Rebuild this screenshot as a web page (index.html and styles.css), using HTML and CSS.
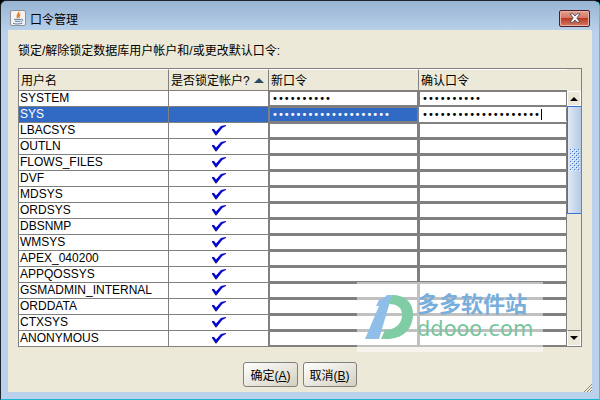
FILE: index.html
```
<!DOCTYPE html>
<html lang="zh-CN">
<head>
    <meta charset="utf-8">
    <title>口令管理</title>
    <link rel="stylesheet" href="styles.css">
</head>
<body>
    <div class="window">
        <header class="titlebar">
            <svg class="app-icon" viewBox="0 0 16 16">
                <rect x="0.5" y="0.5" width="15" height="15" rx="1.5" fill="#f4f3f1" stroke="#8d9299"/>
                <path d="M8.6 1.8C9.8 3.8 5.4 5 7.6 8.2M10.4 4.2C8.4 5.2 8.4 6 9.2 8" fill="none" stroke="#e5822b" stroke-width="1.5"/>
                <path d="M4 9.4h7M5 11.3h5.4M3 13.4c2.6.8 6.8.8 9.4-.3M11.2 9.3c2.4-.5 2 2-.4 2.2" fill="none" stroke="#557da3"/>
            </svg>
            <h1>口令管理</h1>
            <button class="close" type="button" aria-label="关闭">
                <svg viewBox="0 0 12 10">
                    <path d="M1 .8h3L6 3 8 .8h3L7.8 5 11 9.2H8L6 7 4 9.2H1L4.2 5z" fill="#fff" stroke="#4d5260" stroke-width=".9"/>
                </svg>
            </button>
        </header>
        <form class="content">
            <p class="hint">锁定/解除锁定数据库用户帐户和/或更改默认口令:</p>
            <div class="grid">
                <table id="accounts">
                    <colgroup>
                        <col class="col-user">
                        <col class="col-lock">
                        <col class="col-new">
                        <col>
                    </colgroup>
                    <thead>
                        <tr>
                            <th>用户名</th>
                            <th>是否锁定帐户? <svg class="sort" viewBox="0 0 10 5"><path d="M0 5 5 0l5 5z" fill="#2b4a63"/></svg></th>
                            <th>新口令</th>
                            <th>确认口令</th>
                        </tr>
                    </thead>
                    <tbody></tbody>
                </table>
                <div class="scrollbar">
                    <button class="arrow" type="button" aria-label="向上"><svg viewBox="0 0 8 4"><path d="M0 4 4 0l4 4z"/></svg></button>
                    <div class="track">
                        <div class="thumb">
                            <svg viewBox="0 0 10 22">
                                <defs>
                                    <pattern id="dots" width="4" height="4" patternUnits="userSpaceOnUse">
                                        <path d="M0 0h1v1H0zM2 2h1v1H2z" fill="#3a74d0"/>
                                        <path d="M1 1h1v1H1zM3 3h1v1H3z" fill="#fff"/>
                                    </pattern>
                                </defs>
                                <rect width="10" height="22" fill="url(#dots)"/>
                            </svg>
                        </div>
                    </div>
                    <button class="arrow down" type="button" aria-label="向下"><svg viewBox="0 0 8 4"><path d="M0 0h8L4 4z"/></svg></button>
                </div>
            </div>
            <div class="actions">
                <button type="button">确定(<u>A</u>)</button>
                <button type="button">取消(<u>B</u>)</button>
            </div>
        </form>
        <svg class="grip" viewBox="0 0 8 8"><path d="M0 8 8 0M3 8l5-5M6 8l2-2" stroke="#8c8a7e"/></svg>
        <div class="watermark">
            <svg viewBox="0 0 48 45">
                <path d="M14 5C18 4 20 2 22 0H27L14 44H0L14 11H11z" fill="#8fbfe8"/>
                <path d="M27 0C41 0 48 8 48 19 48 35 37 44 22 44H16L20 35C31 35 37 28 37 20 37 13 33 9 24 9z" fill="#7fcca5"/>
            </svg>
            <div class="brand">
                <strong>多多软件站</strong>
                <span>ddooo.com</span>
            </div>
        </div>
    </div>

    <script>
        const users = ["SYSTEM", "SYS", "LBACSYS", "OUTLN", "FLOWS_FILES", "DVF", "MDSYS", "ORDSYS",
            "DBSNMP", "WMSYS", "APEX_040200", "APPQOSSYS", "GSMADMIN_INTERNAL", "ORDDATA", "CTXSYS", "ANONYMOUS"];
        const lengths = { SYSTEM: 10, SYS: 20 };
        const check = '<svg class="check" viewBox="0 0 14 11"><path d="M0 4h2l2 2.5L9 1l5-1v1L10 3 4.5 10H3.5L0 5z" fill="#0000d8"/><path d="M1 6l3 4.5L10 3" fill="none" stroke="#222266" stroke-width=".6"/></svg>';
        const body = document.querySelector("#accounts tbody");

        users.forEach(function (user) {
            const value = "x".repeat(lengths[user] || 0);
            const row = document.createElement("tr");
            if (user == "SYS") {
                row.className = "selected";
            }
            row.innerHTML =
                "<td>" + user + "</td>" +
                '<td class="lock">' + (value ? "" : check) + "</td>" +
                '<td class="pw"><input type="password" aria-label="' + user + ' 新口令" value="' + value + '"></td>' +
                '<td class="pw"><input type="password" aria-label="' + user + ' 确认口令" value="' + value + '"></td>';
            body.appendChild(row);
        });

        // steady caret after the last character of the field being edited
        const caret = document.createElement("span");
        caret.className = "caret";
        document.querySelector(".selected td:last-child").appendChild(caret);
    </script>
</body>
</html>
```
FILE: styles.css
```
* {
    box-sizing: border-box;
}

body {
    margin: 0;
    background-color: #000000;
    font-family: "Liberation Sans", "Noto Sans CJK SC", sans-serif;
    font-size: 12px;
    color: #000000;
}

.window {
    position: relative;
    display: flex;
    flex-direction: column;
    min-height: 100vh;
    padding: 0 7px 7px;
    border: 1px solid #20242c;
    border-right-color: #22d3ee;
    border-bottom-color: #18b8d0;
    border-radius: 6px 6px 0 0;
    background: linear-gradient(#98b4d2, #b9d1ea 30px, #b9d1ea);
}

.titlebar {
    display: flex;
    align-items: center;
    height: 29px;
    padding: 5px 2px 0 2px;
}

.app-icon {
    width: 16px;
    height: 16px;
    margin-right: 4px;
}

h1 {
    flex: 1;
    margin: 0;
    font-size: 12px;
    font-weight: normal;
}

.close {
    display: flex;
    align-items: center;
    justify-content: center;
    width: 31px;
    height: 17px;
    padding: 0;
    border: 1px solid #4a1f28;
    border-radius: 2px;
    background: linear-gradient(#e3a08f, #d5735f 50%, #b93a24 50%, #d47b66);
    box-shadow: inset 0 0 0 1px #e9b0a3;
}

.close svg {
    width: 12px;
    height: 10px;
}

.content {
    flex: 1;
    display: flex;
    flex-direction: column;
    padding: 12px 10px 5px;
    background-color: #ece9d8;
}

.hint {
    margin: 0 0 8px;
    line-height: 18px;
}

.grid {
    flex: 1;
    display: flex;
    border: 1px solid #808080;
}

table {
    flex: 1;
    table-layout: fixed;
    border-collapse: separate;
    border-spacing: 0;
}

.col-user,
.col-new {
    width: 150px;
}

.col-lock {
    width: 100px;
}

th {
    height: 22px;
    padding: 1px 0 0 2px;
    border-right: 1px solid #808080;
    border-bottom: 1px solid #808080;
    border-top: 1px solid #ffffff;
    font-weight: normal;
    line-height: 18px;
    text-align: left;
    white-space: nowrap;
}

th:last-child {
    border-right: none;
}

.sort {
    width: 10px;
    height: 5px;
    margin-left: 1px;
    vertical-align: 2px;
}

td {
    height: 16px;
    padding: 0 0 1px 1px;
    border-right: 1px solid #808080;
    border-bottom: 1px solid #808080;
    background-color: #ffffff;
    line-height: 13px;
}

tr:last-child td {
    height: 15px;
    border-bottom: none;
}

td:last-child {
    border-right: none;
}

.lock {
    padding: 0;
    text-align: center;
}

.check {
    display: block;
    width: 14px;
    height: 11px;
    margin: 0 auto;
}

.pw {
    position: relative;
    padding: 0;
}

.pw input {
    display: block;
    width: 100%;
    height: 15px;
    padding: 0 2px;
    border: 1px solid #808080;
    border-radius: 0;
    outline: none;
    background-color: #ffffff;
    font-family: "DejaVu Sans", sans-serif;
    font-size: 10px;
}

.caret {
    position: absolute;
    top: 2px;
    left: 122px;
    width: 1px;
    height: 11px;
    background-color: #000000;
}

.selected td,
.selected input {
    background-color: #316ac5;
    color: #ffffff;
}

.selected td:last-child input {
    border-color: #ffffff #808080 #ffffff #ffffff;
    background-color: #ffffff;
    color: #000000;
}

.scrollbar {
    display: flex;
    flex-direction: column;
    width: 14px;
    padding-top: 22px;
}

.arrow {
    display: flex;
    align-items: center;
    justify-content: center;
    height: 15px;
    padding: 0;
    border: 1px solid #ffffff;
    background-color: #ece9d8;
}

.down {
    height: 16px;
    border-top-color: #808080;
}

.arrow svg {
    width: 8px;
    height: 4px;
}

.track {
    flex: 1;
}

.thumb {
    display: flex;
    align-items: center;
    justify-content: center;
    height: 108px;
    border: 1px solid #3a74d0;
    border-right: none;
    background: linear-gradient(to right, #dfe9f6, #b4cae4);
}

.thumb svg {
    width: 10px;
    height: 22px;
}

.actions {
    display: flex;
    justify-content: center;
    gap: 5px;
    padding-top: 15px;
}

.actions button {
    height: 25px;
    padding: 0 6px;
    border: 1px solid #808080;
    border-radius: 3px;
    background: linear-gradient(to bottom right, #ffffff, #d4d0c0);
    font-family: inherit;
    font-size: 12px;
}

.grip {
    position: absolute;
    right: 7px;
    bottom: 7px;
    width: 8px;
    height: 8px;
}

.watermark {
    position: absolute;
    right: 56px;
    bottom: 47px;
    display: flex;
    align-items: center;
    gap: 4px;
    width: 186px;
    height: 70px;
    padding-left: 8px;
    background-color: rgba(255, 255, 255, 0.5);
    mix-blend-mode: normal;
}

.watermark svg {
    width: 48px;
    height: 45px;
}

.brand {
    display: flex;
    flex-direction: column;
}

.brand strong {
    font-size: 22px;
    line-height: 24px;
    color: #78aedc;
}

.brand span {
    font-family: "DejaVu Sans", sans-serif;
    font-size: 21px;
    line-height: 24px;
    color: #76c69c;
}
```
